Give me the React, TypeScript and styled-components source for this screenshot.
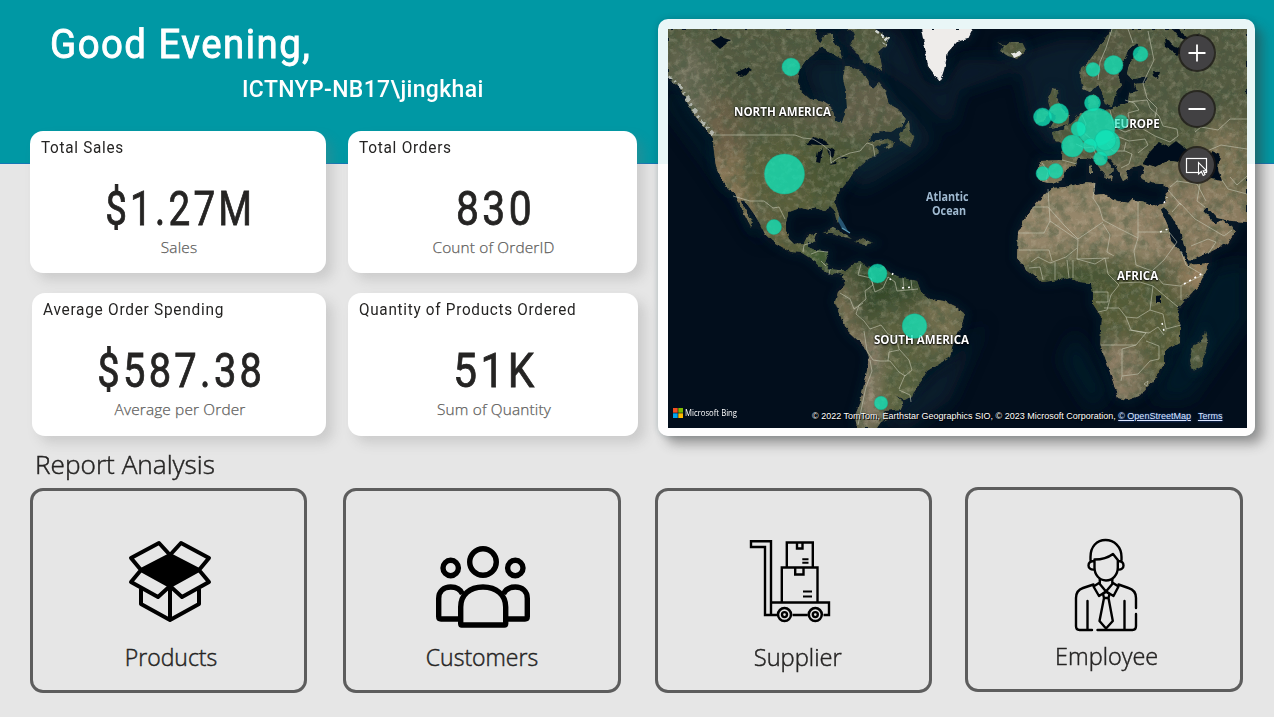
import React from "react";
import styled, { createGlobalStyle } from "styled-components";

const GlobalStyle = createGlobalStyle`
  *, *::before, *::after { box-sizing: border-box; }
  body { margin: 0; background: #e6e6e6; }
`;

const din = `Roboto, "Liberation Sans", sans-serif`;
const segoe = `"Open Sans", "Noto Sans", sans-serif`;

const Page = styled.div`
  width: 1274px;
  height: 717px;
  overflow: hidden;
  background: linear-gradient(to bottom, #0098a4 0 163px, #1478b4 163px 164px, #e6e6e6 164px);
  color: #252423;
  font-family: ${segoe};
`;

const Top = styled.div`
  display: flex;
  height: 436px;
`;

const Summary = styled.div`
  width: 658px;
  padding-left: 30px;
`;

const Greeting = styled.header`
  height: 131px;
  padding-top: 17px;
  color: #fff;
  font-family: ${din};
  font-weight: 500;
`;

const Stretch = styled.span<{ $x?: number; $origin?: string }>`
  display: inline-block;
  white-space: nowrap;
  transform: scaleX(${(p) => p.$x ?? 1});
  transform-origin: ${(p) => p.$origin ?? "left"} center;
`;

const Hello = styled.h1`
  margin: 0 0 0 20px;
  font-size: 41.5px;
  line-height: 54px;
  font-weight: 400;
  letter-spacing: 1.6px;
  -webkit-text-stroke: 0.9px #fff;
`;

const User = styled.div`
  margin: 3px 0 0 212px;
  font-size: 24px;
  line-height: 30px;
  letter-spacing: 0.4px;
`;

const Cards = styled.div`
  display: grid;
  grid-template-columns: 296px 290px;
  grid-template-rows: 142px 143px;
  gap: 20px 22px;
`;

const Card = styled.section<{ $indent?: number; $trim?: number }>`
  margin-left: ${(p) => p.$indent ?? 0}px;
  margin-right: ${(p) => p.$trim ?? 0}px;
  padding: 7px 11px 0;
  border-radius: 13px;
  background: #fff;
  box-shadow: 7px 7px 12px rgba(120, 120, 120, 0.24);
`;

const CardTitle = styled.h2`
  margin: 0;
  font: 400 16px/19px ${din};
  color: #252423;
  letter-spacing: 0.75px;
`;

const Figure = styled.div`
  margin-top: 23px;
  padding-left: 5px;
  text-align: center;
  font: 400 48px/58px ${din};
  letter-spacing: 4px;
  -webkit-text-stroke: 0.8px #252423;
`;

const Caption = styled.div`
  margin-top: -1px;
  padding-left: 2px;
  text-align: center;
  font: 300 15.4px/22px ${segoe};
  letter-spacing: 0.15px;
  color: #605e5c;
  -webkit-text-stroke: 0.25px #605e5c;
`;

const MapCard = styled.section`
  width: 597px;
  height: 417px;
  margin-top: 19px;
  padding: 10px 8px 8px 10px;
  border-radius: 10px;
  background: linear-gradient(to bottom, #e9f6f7 0 145px, #fefefe 145px);
  box-shadow: 8px 8px 12px rgba(60, 60, 60, 0.45), 0 0 6px rgba(0, 60, 70, 0.22);
`;

const MapFrame = styled.div`
  position: relative;
  width: 579px;
  height: 399px;
  overflow: hidden;
  background: #02101f;
`;

const MapSvg = styled.svg`
  display: block;
  width: 579px;
  height: 399px;
`;

const Region = styled.span<{ $x: number; $y: number; $s?: number }>`
  position: absolute;
  left: ${(p) => p.$x}px;
  top: ${(p) => p.$y}px;
  white-space: nowrap;
  color: #fff;
  font: 700 12px/14px ${segoe};
  text-shadow: 0 0 2px #000, 0 1px 2px #000;
  transform: scaleX(${(p) => p.$s ?? 0.963});
  transform-origin: left;
`;

const Ocean = styled(Region)`
  color: #9fb9d0;
  text-shadow: none;
`;

const Bubbles = styled.svg`
  position: absolute;
  inset: 0;
  width: 579px;
  height: 399px;
`;

const Controls = styled.div`
  position: absolute;
  top: 7px;
  left: 512px;
  display: flex;
  flex-direction: column;
  gap: 22px;
`;

const Control = styled.button`
  width: 34px;
  height: 34px;
  padding: 0;
  border: 0;
  border-radius: 50%;
  background: #424143;
  box-shadow: 0 0 0 2px rgba(27, 25, 23, 0.8);
  svg { display: block; }
`;

const Brand = styled.div`
  position: absolute;
  left: 5px;
  top: 378px;
  display: flex;
  align-items: center;
  gap: 2px;
  color: #fff;
  font: 500 8.6px/12px ${segoe};
  svg { display: block; }
`;

const Credits = styled.div`
  position: absolute;
  left: 144px;
  top: 382px;
  white-space: nowrap;
  color: #fff;
  font: 400 9px/11px "Liberation Sans", sans-serif;
  text-shadow: 1px 1px 0 #000, 0 0 1px #000;
  a { color: #dbe6ff; margin-right: 7px; text-decoration: underline; text-shadow: 0 0 2px #2550b0; }
`;

const SectionTitle = styled.h2`
  height: 51px;
  margin: 0;
  padding: 10px 0 0 35px;
  font: 300 25.3px/36px ${segoe};
  -webkit-text-stroke: 0.45px #252423;
`;

const Tiles = styled.nav`
  display: flex;
  align-items: flex-start;
  padding-left: 30px;
`;

const Tile = styled.a<{ $w: number; $gap: number; $lift?: boolean }>`
  display: flex;
  flex-direction: column;
  align-items: center;
  width: ${(p) => p.$w}px;
  height: 205px;
  margin-right: ${(p) => p.$gap}px;
  margin-top: ${(p) => (p.$lift ? 0 : 1)}px;
  padding-top: 45px;
  border: 3px solid #5d5d5d;
  border-radius: 13px;
  font: 300 23px/32px ${segoe};
  svg { display: block; overflow: visible; }
`;

const TileLabel = styled.span<{ $shift: number }>`
  display: block;
  margin-top: 1px;
  padding-left: ${(p) => p.$shift}px;
  -webkit-text-stroke: 0.45px #252423;
`;

type Bubble = [x: number, y: number, r: number, opacity?: number];

const bubbles: Bubble[] = [
  [791, 67, 9], [784.5, 174, 20], [774, 227, 7.5], [877.5, 273.5, 9.5], [914.5, 326, 12.3],
  [881, 403, 6.7], [1042.5, 117, 9], [1058.5, 113.5, 10], [1092.5, 103, 8], [1093, 69.5, 7],
  [1113.5, 65, 9.5], [1140.5, 54, 7.5], [1096, 127, 19], [1078.5, 129, 7.5], [1107, 143, 13], [1105.5, 140, 10.5, 0.6],
  [1072.5, 146, 11], [1090, 145.5, 7], [1100.5, 158.5, 7], [1121, 122, 7, 0.6], [1043, 173.5, 7], [1055.5, 171, 7.5],
];

const land = [
  "M668 29V76L674 83L680 88L688 104L696 117L706 129L713 138L714 152L716 167L722 179L728 189L735 194L740 206L745 215L751 227L753 224L748 214L742 204L740 199L747 204L754 214L760 224L765 234L772 241L782 247L791 252L802 253L810 258L818 264L823 270L832 275L838 272L845 275L846 270L838 270L830 269L825 263L829 252L815 250L808 247L808 243L814 242L817 234L808 235L804 243L794 244L789 239L786 231L786 221L789 212L800 208L811 210L816 208L824 211L830 206L834 210L837 223L840 218L837 208L834 202L838 193L848 181L855 170L863 163L871 158L879 153L876 148L883 144L888 143L885 149L893 146L894 143L886 139L877 140L868 142L870 137L879 131L891 132L901 126L906 119L898 109L889 104L885 91L879 83L873 89L868 80L862 72L852 67L845 67L843 78L846 90L847 107L842 123L836 121L831 107L823 102L810 99L802 92L797 80L799 70L806 60L813 55L818 50L823 45L817 39L816 29Z",
  "M818 45L827 50L836 56L842 59L840 49L833 41L833 34L825 35Z",
  "M848 29L855 34L850 45L858 53L862 61L873 66L883 71L881 61L878 52L886 45L889 38L875 29Z",
  "M899 134L909 121L910 131L914 138L910 147L901 141Z",
  "M997 42L1003 46L1000 51L1008 56L1018 59L1026 50L1022 42L1012 42L1006 46Z",
  "M843 276L845 285L838 292L835 302L840 315L848 331L865 347L869 357L866 377L861 397L855 417L857 428H877L881 422L889 418L885 411L900 409L903 402L895 395L904 400L912 397L914 391L922 380L927 371L942 362L950 357L953 343L962 325L965 314L955 306L944 301L930 299L921 292L917 281L902 278L892 274L882 267L869 268L861 262L855 263L848 269Z",
  "M823 233L833 228L843 233L852 239L844 237L832 233Z",
  "M855 242L862 238L873 243L865 245Z",
  "M1112 29L1104 40L1097 50L1089 61L1081 68L1080 77L1083 89L1090 92L1098 84L1102 93L1105 104L1112 106L1116 93L1122 85L1118 76L1123 63L1128 50L1136 43L1141 49L1129 64L1127 74L1133 80L1148 77L1145 83L1135 84L1137 91L1129 94L1128 103L1115 107L1104 111L1098 108L1098 97L1093 94L1088 99L1089 110L1079 115L1072 122L1062 130L1052 132L1054 140L1063 144L1062 160L1040 161L1037 177L1043 182L1052 184L1062 180L1065 170L1075 165L1078 158L1088 158L1094 160L1101 170L1107 177L1109 173L1114 170L1101 155L1104 153L1114 164L1119 173L1123 181L1128 178L1126 171L1132 168L1141 165L1145 168L1140 178L1151 183L1162 184L1168 188L1165 203L1154 206L1140 202L1132 199L1128 203L1113 200L1104 194L1094 195L1095 183L1087 182L1065 187L1052 188L1042 197L1033 207L1024 220L1018 232L1017 258L1027 270L1042 282L1059 280L1070 277L1078 282L1091 283L1093 292L1093 304L1102 318L1100 344L1107 363L1114 385L1118 398L1128 400L1139 396L1151 383L1158 374L1165 363V350L1180 342V323L1177 310L1188 297L1200 284L1210 263L1188 265L1181 252L1171 241L1168 226L1161 210L1165 207L1173 219L1181 234L1185 249L1189 261L1208 253L1228 243L1236 231L1224 220L1216 224L1203 211L1207 207L1217 218L1232 221L1247 222V29Z",
  "M1052 89L1059 91L1056 97L1062 107L1069 117L1068 125L1050 128L1056 118L1051 112L1048 101Z",
  "M1037 112L1044 108L1049 113L1046 121L1036 123Z",
  "M1205 331L1208 342L1201 367L1193 371L1189 361L1193 346L1201 342Z",
  "M1105 176L1113 175L1112 181Z M1089 166L1092 165L1092 174L1089 174Z",
].join(" ");

const greenland = "M921 29L925 48L928 66L940 82L944 70L948 52L957 42L968 39L973 29Z";

const lakes =
  "M806 144L813 137L823 140L829 145L818 145Z M816 162L818 151L823 148L820 163Z M827 148L835 150L833 158L829 155Z M829 165L837 161L836 164Z M838 158L848 156L846 159Z M711 41L720 37L731 40L726 44L720 49Z M735 73L748 67L752 70L742 76Z M1143 163L1149 153L1159 142L1168 147L1176 141L1189 151L1187 164L1169 160L1156 167Z M1211 151L1220 155L1218 169L1222 181L1211 179L1206 160Z M1152 71L1160 72L1158 79L1153 76Z M1156 297L1161 296L1161 302L1156 302Z M1172 29L1180 38L1194 43L1200 33L1190 40L1178 29Z M1165 37L1172 45L1184 51L1178 55L1166 47Z";

const borders = [
  "M713 135H795L803 138L813 139L823 145L830 151L831 163L838 158L850 153L860 151L867 143L873 145L875 157",
  "M733 196L750 201L764 201L773 208L779 207L785 219",
  "M803 252L804 245L811 243 M811 254L819 251L828 252 M821 261L826 266 M829 275L830 269",
  "M861 264L858 275L871 278L873 285L865 291L866 299L859 305L856 314L864 321L870 329L881 325L888 334L896 337L899 349L909 360L912 370L905 376L899 372L890 361L880 361L873 360L867 351L864 331 M840 293L850 299L854 309L863 303 M871 278L875 292L883 288L888 277L895 282L897 291L918 289 M903 278L904 290 M911 280L912 289 M888 361L889 352L899 350 M870 360L872 371L866 387L863 401L858 425 M899 390L910 395L911 402 M905 375L899 389",
  "M1112 29L1106 48L1100 62L1098 80 M1128 29L1133 43 M1148 31L1154 60L1143 83L1147 98L1157 108L1155 118 M1125 100L1134 103L1139 110L1128 113L1130 124L1147 125 M1082 115L1086 124L1083 132L1091 139L1101 143L1119 137L1129 141L1145 139L1148 145L1138 153 M1110 110L1114 127L1125 132L1133 129L1143 129L1155 136L1170 142L1178 136L1177 129L1163 126L1159 116L1150 108L1147 100L1128 102 M1107 144L1113 151L1125 151L1132 154L1129 164L1121 168 M1126 142L1124 151 M1062 160L1077 164 M1042 163L1048 171L1046 181 M1076 144L1085 148L1093 147L1096 155",
  "M1095 183L1093 198L1099 207L1103 220L1120 229L1138 238V202 M1138 238L1134 251L1136 265L1152 271L1164 260L1177 242L1169 232 M1138 232H1168 M1033 207H1048L1064 225L1078 239L1103 222 M1018 233H1044L1050 221 M1048 189L1050 221L1078 240L1077 259L1109 258 M1019 250H1049L1052 261 M1031 262L1038 257L1050 263L1066 257L1077 248 M1029 268L1040 267L1043 280 M1055 262V280 M1067 260L1069 278 M1073 260V278 M1077 259L1095 264L1105 258L1108 274L1119 285L1111 295L1107 310L1098 312 M1093 292H1108V302H1096 M1103 224L1110 235L1107 252L1114 256 M1119 283L1140 282L1153 286L1150 310L1137 318L1126 317L1119 308H1104 M1150 310L1163 314L1166 329L1181 325 M1153 286L1178 307 M1153 272L1163 284L1180 286L1203 275L1186 265L1181 251 M1181 286V300 M1101 345H1136L1146 333L1131 330L1126 317 M1136 345L1122 349V376L1138 374L1150 361L1159 359V346L1146 341 M1122 376L1121 381 M1144 384L1148 381L1147 386Z M1129 330L1149 333L1158 327L1164 335",
  "M1170 187L1177 181L1197 184L1206 201 M1172 212L1180 203L1195 219L1224 236L1232 230 M1168 190L1181 205 M1222 180L1228 189L1247 194 M1200 184L1197 201L1205 207 M1195 132L1201 127L1218 130L1230 119H1247 M1192 149L1207 151L1221 145L1247 149 M1230 177L1237 185L1247 176 M1208 254L1216 242L1208 239L1191 246",
].join(" ");

const tint: [number, number, number, number, string][] = [
  [735, 67, 80, 45, "#525a40"], [700, 150, 45, 65, "#6c6047"], [740, 186, 40, 32, "#877657"],
  [800, 176, 60, 40, "#5a5f3b"], [835, 170, 30, 32, "#4c5634"], [853, 105, 55, 28, "#625f48"],
  [690, 92, 22, 50, "#696a55"], [785, 237, 30, 20, "#64613d"], [820, 256, 24, 15, "#435d36"],
  [882, 295, 55, 38, "#34482b"], [915, 333, 50, 30, "#5a5e3c"], [941, 319, 20, 32, "#756f50"],
  [845, 325, 12, 50, "#7b7154"], [868, 383, 13, 50, "#938270"], [900, 386, 26, 38, "#5c633f"],
  [1090, 223, 110, 51, "#95866a"], [1200, 219, 56, 48, "#8c7b61"], [1080, 268, 75, 15, "#606340"],
  [1095, 283, 52, 20, "#425232"], [1130, 303, 48, 33, "#525a35"], [1151, 334, 42, 43, "#5b5f3b"],
  [1119, 376, 26, 34, "#8b7c64"], [1198, 275, 22, 22, "#947e5d"], [1120, 70, 34, 52, "#565840"],
  [1130, 125, 76, 40, "#525a3c"], [1190, 67, 72, 58, "#525a3f"], [1054, 171, 23, 18, "#7f7352"],
  [1166, 174, 38, 18, "#777054"], [1225, 160, 25, 40, "#807556"], [1109, 150, 12, 30, "#61614a"],
];

function WorldMap() {
  return (
    <MapSvg viewBox="668 29 579 399" aria-hidden="true">
      <defs>
        <clipPath id="land"><path d={land} /></clipPath>
        <filter id="soft" x="-30%" y="-30%" width="160%" height="160%"><feGaussianBlur stdDeviation="9" /></filter>
        <filter id="shelf" x="-10%" y="-10%" width="120%" height="120%"><feGaussianBlur stdDeviation="4" /></filter>
        <filter id="terrain" x="0" y="0" width="100%" height="100%">
          <feTurbulence type="fractalNoise" baseFrequency="0.09 0.08" numOctaves="6" seed="12" />
          <feColorMatrix values="0 0 0 0 0.06  0 0 0 0 0.1  0 0 0 0 0.05  3 0 0 0 -1.25" />
        </filter>
        <filter id="grain" x="0" y="0" width="100%" height="100%">
          <feTurbulence type="fractalNoise" baseFrequency="0.16" numOctaves="4" seed="4" />
          <feColorMatrix values="0 0 0 0 0.68  0 0 0 0 0.62  0 0 0 0 0.48  0 2.2 0 0 -1.0" />
        </filter>
        <filter id="coast" x="-3%" y="-3%" width="106%" height="106%">
          <feTurbulence type="fractalNoise" baseFrequency="0.16" numOctaves="3" seed="8" result="n" />
          <feDisplacementMap in="SourceGraphic" in2="n" scale="4" xChannelSelector="R" yChannelSelector="G" />
          <feGaussianBlur stdDeviation="0.3" />
        </filter>
      </defs>
      <rect x="668" y="29" width="579" height="399" fill="#020e1c" />
      <g filter="url(#soft)" opacity="0.75">
        <path d="M800 60L850 60L880 80L910 110L935 140L910 160L860 190L830 140Z" fill="#0c2534" />
        <path d="M815 29H900L925 80L940 90L960 60H1000L1060 40L1100 40L1110 110L1050 150L1030 120L1020 70L960 90L950 130L910 90L870 60Z" fill="#092031" />
        <path d="M668 75L720 150L735 200L770 245L755 235L705 160L668 110Z" fill="#061b2a" />
        <path d="M890 410L960 350L985 320L950 400L910 428H880Z" fill="#0a2130" />
        <path d="M1150 400L1210 270L1247 260V320L1190 400Z" fill="#061a2a" />
        <path d="M1075 330L1110 395L1090 410L1060 360Z" fill="#061a2a" />
      </g>
      <path d={land + greenland} fill="none" stroke="#0d2734" strokeWidth="6" filter="url(#shelf)" opacity="0.55" />
      <g filter="url(#coast)">
        <g clipPath="url(#land)">
          <rect x="668" y="29" width="579" height="399" fill="#545a3f" />
          <g filter="url(#soft)">
            {tint.map(([x, y, rx, ry, fill], i) => <ellipse key={i} cx={x} cy={y} rx={rx} ry={ry} fill={fill} />)}
          </g>
          <rect x="668" y="29" width="579" height="399" filter="url(#terrain)" opacity="0.45" />
          <rect x="668" y="29" width="579" height="399" filter="url(#grain)" opacity="0.3" />
          <path d="M668 76L681 88L690 104L700 119L713 134" fill="none" stroke="#c9cfca" strokeWidth="4" strokeDasharray="5 3 2 4" opacity="0.75" />
          <path d="M876 30L888 38L884 44" fill="none" stroke="#d4d8d4" strokeWidth="4" strokeDasharray="4 3" />
        </g>
        <path d={lakes} fill="#04111b" />
        <path d={greenland} fill="#eeecea" />
        <path d="M1012 54L1018 51L1021 55L1014 58Z" fill="#e7e8e4" />
      </g>
      <path d="M838 221L842 229L848 231L843 222L839 216" fill="#2d6080" opacity="0.85" />
      <path d="M842 228L850 233" stroke="#5f9eba" strokeWidth="1.2" />
      <path d={borders} fill="none" stroke="#c9cbb8" strokeWidth="0.8" opacity="0.72" strokeLinejoin="round" />
      <g fill="none" stroke="#fff" strokeWidth="1.5" strokeDasharray="2 4">
        <path d="M893 273L890 280M902 288L912 287M1160 232L1168 229M1184 284L1203 273M1162 323L1164 331M1164 203L1167 197" />
      </g>
    </MapSvg>
  );
}

function BoxIcon() {
  return (
    <svg width="82" height="82" viewBox="0 0 82 82" fill="none" stroke="#000" strokeWidth="4" strokeLinejoin="round" strokeLinecap="round">
      <path d="M12 29L41 14L70 29L41 45Z" fill="#000" />
      <path d="M12 29L2 17L30 2L41 14M70 29L80 17L52 2L41 14M12 29L2 41L29 56L41 45M70 29L80 41L53 56L41 45M12 48V63L41 79L70 63V48M41 47V78" />
    </svg>
  );
}

function PeopleIcon() {
  return (
    <svg width="94" height="82" viewBox="0 0 94 82" fill="none" stroke="#000" strokeWidth="5.4" strokeLinejoin="round">
      <circle cx="47" cy="16" r="13.3" />
      <circle cx="14.7" cy="22" r="7.7" />
      <circle cx="79.3" cy="22" r="7.7" />
      <path d="M25.5 73H5C3.5 73 2.7 72 2.7 70.5V52.5C2.7 45 8 41 14.7 41C20 41 24.5 43.5 26.5 48M68.5 73H89C90.5 73 91.3 72 91.3 70.5V52.5C91.3 45 86 41 79.3 41C74 41 69.5 43.5 67.5 48" />
      <path d="M25.7 79H68.3C69.2 79 69.7 78.5 69.7 77.5V61C69.7 49 60.5 41 47 41S24.7 49 24.7 61V77.5C24.7 78.5 25 79 25.7 79Z" />
    </svg>
  );
}

function TrolleyIcon() {
  return (
    <svg width="80" height="82" viewBox="0 0 80 82" fill="none" stroke="#000" strokeWidth="2.4">
      <path d="M1 1.3H21V75H15V7H1ZM21 62.5H79V75H73.5M57.8 75H42.5M27.2 75H15" />
      <path d="M31.8 62V27.5H67.5V62M36.8 27V2.5H62.8V27M45.2 27.5V34.5H53.5V27.5M47 2.5V8.5H52.5V2.5" />
      <path d="M53 51.5H62M53 56.5H62M52.3 19.2H58.5M52.3 22.8H58.5" strokeWidth="2" />
      <circle cx="34.5" cy="74.6" r="6.5" strokeWidth="2.5" /><circle cx="34.5" cy="74.6" r="2.5" />
      <circle cx="65.3" cy="74.6" r="6.5" strokeWidth="2.5" /><circle cx="65.3" cy="74.6" r="2.5" />
    </svg>
  );
}

function EmployeeIcon() {
  return (
    <svg width="62" height="92" viewBox="0 0 62 92" fill="none" stroke="#000" strokeWidth="2.4" strokeLinejoin="round" strokeLinecap="round">
      <path d="M15.5 21V18C15.5 7.5 22 1 30.5 1S46.500 7.5 46.500 18V21" />
      <path d="M19.500 20.500C28 20.500 34 18 38 15L42.800 21V28.500C42.800 36 37.500 41.500 31 41.500S19.500 36 19.500 28.500ZM19.500 22C15 22 13.500 23.500 13.500 26.500C13.500 29 15.500 31 19.500 30.500M42.800 22C46.500 22 48.500 23.500 48.500 26.500C48.500 29 46.500 31 42.800 30.500" />
      <path d="M24.800 40V45L31 52.500L37.300 45V40M24.800 43.500L18.500 47.500L24 57L31 52.500L38.500 57L43.500 47.500L37.300 43.500" />
      <path d="M18.500 45.500L8 49C3.500 50.500 1 54 1 59V87C1 90 2 91 4.500 91H17M43.500 45.500L53.500 49C58.500 50.500 61 54 61 59V69M61 75V87C61 90 60 91 57.500 91H22.500M12.500 62V90M49.500 62V90" />
      <path d="M31 52.500L28 55L29 59H33.500L34.500 55ZM29 59L24.500 82L31 89.500L37.800 82L33.500 59" />
    </svg>
  );
}

const tiles = [
  { label: "Products", w: 277, gap: 36, icon: <BoxIcon />, x: 1, top: 5, shift: 2, labelShift: 5 },
  { label: "Customers", w: 278, gap: 34, icon: <PeopleIcon />, x: 1, top: 10, shift: 2, labelShift: 0 },
  { label: "Supplier", w: 277, gap: 33, icon: <TrolleyIcon />, x: 1.03, top: 4, shift: -8, labelShift: 8 },
  { label: "Employee", w: 278, gap: 0, icon: <EmployeeIcon />, x: 1.02, top: 4, shift: 4, labelShift: 5 },
];

const IconSlot = styled.span<{ $top: number; $shift: number }>`
  display: block;
  height: 104px;
  padding-top: ${(p) => p.$top}px;
  margin-left: ${(p) => p.$shift}px;
`;

export default function App() {
  return (
    <>
      <GlobalStyle />
      <Page>
        <Top>
          <Summary>
            <Greeting>
              <Hello><Stretch $x={0.925}>Good Evening,</Stretch></Hello>
              <User><Stretch $x={0.955}>ICTNYP-NB17\jingkhai</Stretch></User>
            </Greeting>
            <Cards>
              <Card>
                <CardTitle><Stretch $x={0.955}>Total Sales</Stretch></CardTitle>
                <Figure><Stretch $x={0.805} $origin="center">$1.27M</Stretch></Figure>
                <Caption>Sales</Caption>
              </Card>
              <Card $trim={1}>
                <CardTitle><Stretch $x={0.965}>Total Orders</Stretch></CardTitle>
                <Figure><Stretch $x={0.85} $origin="center">830</Stretch></Figure>
                <Caption>Count of OrderID</Caption>
              </Card>
              <Card $indent={2}>
                <CardTitle><Stretch $x={0.965}>Average Order Spending</Stretch></CardTitle>
                <Figure><Stretch $x={0.83} $origin="center">$587.38</Stretch></Figure>
                <Caption>Average per Order</Caption>
              </Card>
              <Card>
                <CardTitle><Stretch $x={0.955}>Quantity of Products Ordered</Stretch></CardTitle>
                <Figure><Stretch $x={0.88} $origin="55%">51K</Stretch></Figure>
                <Caption>Sum of Quantity</Caption>
              </Card>
            </Cards>
          </Summary>
          <MapCard>
            <MapFrame>
              <WorldMap />
              <Region $x={66} $y={76}>NORTH AMERICA</Region>
              <Region $x={446} $y={88}>EUROPE</Region>
              <Region $x={449} $y={240}>AFRICA</Region>
              <Region $x={206} $y={304}>SOUTH AMERICA</Region>
              <Ocean $x={258} $y={161} $s={0.9}>Atlantic</Ocean>
              <Ocean $x={264} $y={175} $s={0.9}>Ocean</Ocean>
              <Bubbles viewBox="668 29 579 399">
                {bubbles.map(([x, y, r, opacity = 0.78], i) => (
                  <circle key={i} cx={x} cy={y} r={r} fill="#12e3b7" fillOpacity={opacity} stroke="#0fb797" strokeOpacity="0.6" strokeWidth="0.7" />
                ))}
              </Bubbles>
              <Controls>
                <Control aria-label="Zoom in">
                  <svg width="34" height="34"><path d="M8.500 17H25.500M17 8.500V25.500" stroke="#fff" strokeWidth="1.8" /></svg>
                </Control>
                <Control aria-label="Zoom out">
                  <svg width="34" height="34"><path d="M8.500 17H25.500" stroke="#fff" strokeWidth="2" /></svg>
                </Control>
                <Control aria-label="Select area">
                  <svg width="34" height="34" fill="none">
                    <rect x="6.500" y="10.500" width="20" height="14" stroke="#fff" strokeWidth="1.2" />
                    <path d="M18.500 14.500V26L21.300 23.500L23.200 27.500L25 26.600L23.200 22.700H26.500Z" fill="#424143" stroke="#fff" strokeWidth="1.1" />
                  </svg>
                </Control>
              </Controls>
              <Brand>
                <svg width="10" height="10"><path fill="#f25022" d="M0 0h4.700v4.700H0z" /><path fill="#7fba00" d="M5.300 0H10v4.700H5.300z" /><path fill="#00a4ef" d="M0 5.300h4.700V10H0z" /><path fill="#ffb900" d="M5.300 5.300H10V10H5.300z" /></svg>
                <Stretch $x={0.9}>Microsoft Bing</Stretch>
              </Brand>
              <Credits>© 2022 TomTom, Earthstar Geographics SIO, © 2023 Microsoft Corporation, <a>© OpenStreetMap</a><a>Terms</a></Credits>
            </MapFrame>
          </MapCard>
        </Top>
        <SectionTitle><Stretch $x={1.035}>Report Analysis</Stretch></SectionTitle>
        <Tiles>
          {tiles.map((t) => (
            <Tile key={t.label} $w={t.w} $gap={t.gap} $lift={t.label === "Employee"}>
              <IconSlot $top={t.top} $shift={t.shift}>{t.icon}</IconSlot>
              <TileLabel $shift={t.labelShift}><Stretch $x={t.x} $origin="center">{t.label}</Stretch></TileLabel>
            </Tile>
          ))}
        </Tiles>
      </Page>
    </>
  );
}
